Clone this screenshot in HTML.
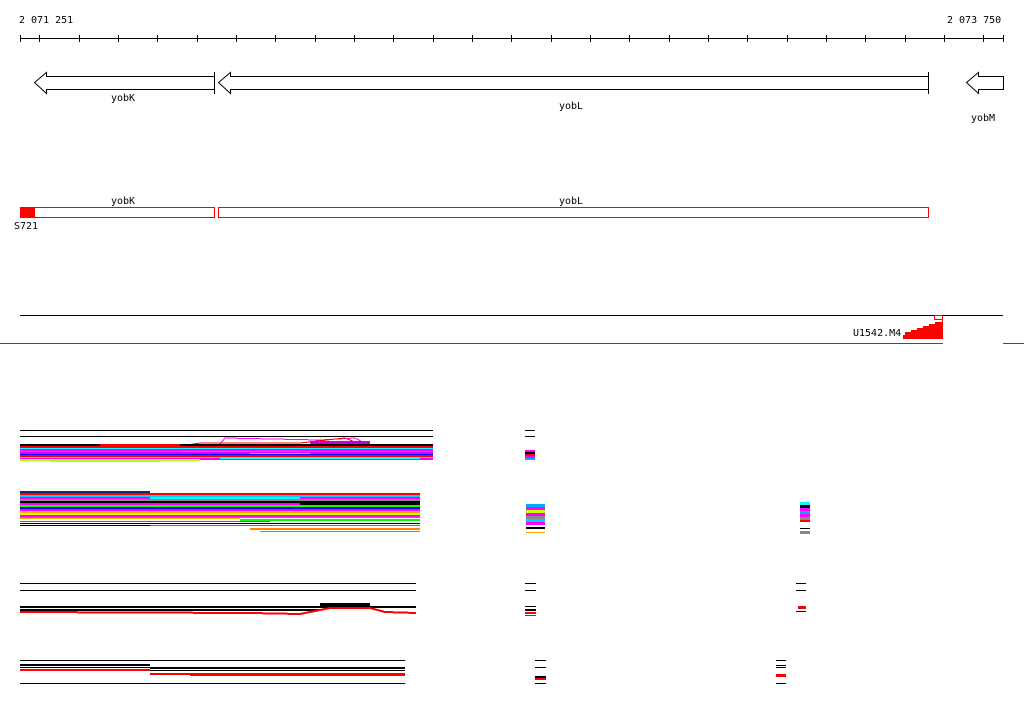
<!DOCTYPE html>
<html><head><meta charset="utf-8"><style>
html,body{margin:0;padding:0;background:#fff;width:1024px;height:714px;overflow:hidden}
svg{display:block}
text{font-family:"DejaVu Sans Mono","Liberation Mono",monospace;font-size:10px;fill:#000}
</style></head><body>
<svg width="1024" height="714" viewBox="0 0 1024 714" shape-rendering="crispEdges">
<text x="19" y="23">2 071 251</text>
<text x="947" y="23">2 073 750</text>
<line x1="20" y1="38.5" x2="1003" y2="38.5" stroke="#000"/>
<g stroke="#000">
<line x1="20.5" y1="35" x2="20.5" y2="42"/><line x1="1003.5" y1="35" x2="1003.5" y2="42"/>
<line x1="39.5" y1="35" x2="39.5" y2="42"/><line x1="79.5" y1="35" x2="79.5" y2="42"/><line x1="118.5" y1="35" x2="118.5" y2="42"/><line x1="157.5" y1="35" x2="157.5" y2="42"/><line x1="197.5" y1="35" x2="197.5" y2="42"/><line x1="236.5" y1="35" x2="236.5" y2="42"/><line x1="275.5" y1="35" x2="275.5" y2="42"/><line x1="315.5" y1="35" x2="315.5" y2="42"/><line x1="354.5" y1="35" x2="354.5" y2="42"/><line x1="393.5" y1="35" x2="393.5" y2="42"/><line x1="433.5" y1="35" x2="433.5" y2="42"/><line x1="472.5" y1="35" x2="472.5" y2="42"/><line x1="511.5" y1="35" x2="511.5" y2="42"/><line x1="551.5" y1="35" x2="551.5" y2="42"/><line x1="590.5" y1="35" x2="590.5" y2="42"/><line x1="629.5" y1="35" x2="629.5" y2="42"/><line x1="669.5" y1="35" x2="669.5" y2="42"/><line x1="708.5" y1="35" x2="708.5" y2="42"/><line x1="747.5" y1="35" x2="747.5" y2="42"/><line x1="787.5" y1="35" x2="787.5" y2="42"/><line x1="826.5" y1="35" x2="826.5" y2="42"/><line x1="865.5" y1="35" x2="865.5" y2="42"/><line x1="905.5" y1="35" x2="905.5" y2="42"/><line x1="944.5" y1="35" x2="944.5" y2="42"/><line x1="983.5" y1="35" x2="983.5" y2="42"/>
</g>
<g fill="#fff" stroke="#000" shape-rendering="auto">
<path d="M214.5 76.5 H46.5 V72.5 L34.5 82.5 L46.5 93.5 V89.5 H214.5"/>
<path d="M928.5 76.5 H230.5 V72.5 L218.5 82.5 L230.5 93.5 V89.5 H928.5"/>
<path d="M1003.5 76.5 H978.5 V72.5 L966.5 82.5 L978.5 93.5 V89.5 H1003.5 Z"/>
</g>
<line x1="214.5" y1="72" x2="214.5" y2="94" stroke="#000"/>
<line x1="928.5" y1="72" x2="928.5" y2="94" stroke="#000"/>
<text x="111" y="101">yobK</text><text x="559" y="109">yobL</text><text x="971" y="121">yobM</text>
<text x="111" y="204">yobK</text><text x="559" y="204">yobL</text>
<rect x="20.5" y="207.5" width="194" height="10" fill="#fff" stroke="#f00"/>
<rect x="218.5" y="207.5" width="710" height="10" fill="#fff" stroke="#f00"/>
<rect x="20" y="207" width="15" height="11" fill="#f00"/>
<text x="14" y="229">S721</text>
<line x1="20" y1="315.5" x2="1003" y2="315.5" stroke="#000"/>
<rect x="934.5" y="315.5" width="8" height="4" fill="#fff" stroke="#f00"/>
<line x1="942.5" y1="316" x2="942.5" y2="339" stroke="#f00"/>
<path d="M903 339 L942 339 L942 322 L935 322 L935 324 L929 324 L929 326 L923 326 L923 328 L917 328 L917 330 L911 330 L911 332 L905 332 L905 335 L903 335 Z" fill="#f00" shape-rendering="auto"/>
<text x="853" y="336">U1542.M4</text>
<line x1="0" y1="343.5" x2="943" y2="343.5" stroke="#f00"/>
<line x1="1003" y1="343.5" x2="1024" y2="343.5" stroke="#f00"/>

<!-- group 1 -->
<g fill="#000"><rect x="20" y="430" width="413" height="1"/><rect x="20" y="436" width="413" height="1"/></g>
<path d="M220 444 L225 438 L320 440 L355 438 L370 446" fill="none" stroke="#f0f"/>
<path d="M180 446 L200 443 L300 443 L345 438 L365 446" fill="none" stroke="#f00"/>
<g>
<rect x="20" y="444" width="413" height="2" fill="#000"/><rect x="20" y="446" width="413" height="2" fill="#f00"/>
<rect x="20" y="448" width="413" height="1" fill="#0ff"/><rect x="20" y="449" width="413" height="2" fill="#f0f"/>
<rect x="20" y="451" width="413" height="1" fill="#888"/><rect x="20" y="452" width="413" height="2" fill="#d0f"/>
<rect x="20" y="454" width="413" height="1" fill="#00f"/><rect x="20" y="455" width="413" height="2" fill="#f00"/>
<rect x="20" y="457" width="413" height="1" fill="#0ff"/><rect x="20" y="458" width="413" height="2" fill="#f0f"/>
<rect x="100" y="444" width="80" height="2" fill="#f00"/><rect x="310" y="441" width="60" height="3" fill="#c0c"/>
<rect x="180" y="451" width="120" height="1" fill="#0f0"/><rect x="250" y="453" width="60" height="1" fill="#fa0"/>
<rect x="20" y="459" width="180" height="2" fill="#af0"/><rect x="50" y="461" width="110" height="1" fill="#cf0"/>
<rect x="220" y="457" width="200" height="2" fill="#0ff"/><rect x="370" y="459" width="63" height="1" fill="#f0f"/>
</g>
<!-- group 2 -->
<g>
<rect x="20" y="491" width="130" height="2" fill="#036"/>
<rect x="20" y="493" width="400" height="2" fill="#f00"/><rect x="20" y="495" width="400" height="2" fill="#0cf"/>
<rect x="20" y="497" width="400" height="2" fill="#f0f"/><rect x="20" y="499" width="400" height="2" fill="#888"/>
<rect x="20" y="501" width="400" height="2" fill="#000"/><rect x="20" y="503" width="400" height="2" fill="#f0f"/>
<rect x="20" y="505" width="400" height="2" fill="#0f0"/><rect x="20" y="507" width="400" height="2" fill="#00f"/>
<rect x="20" y="509" width="400" height="2" fill="#f0f"/><rect x="20" y="511" width="400" height="2" fill="#fa0"/>
<rect x="20" y="513" width="400" height="2" fill="#cf0"/><rect x="20" y="515" width="400" height="2" fill="#f0f"/>
<rect x="20" y="517" width="400" height="1" fill="#888"/>
<rect x="20" y="518" width="220" height="1" fill="#fa0"/><rect x="240" y="519" width="180" height="2" fill="#0f0"/><rect x="20" y="521" width="250" height="1" fill="#f0f"/>
<rect x="20" y="523" width="400" height="1" fill="#000"/><rect x="150" y="525" width="270" height="1" fill="#f0f"/>
<rect x="250" y="528" width="170" height="2" fill="#f80"/><rect x="260" y="531" width="160" height="1" fill="#888"/>
<rect x="20" y="525" width="130" height="1" fill="#000"/>
<rect x="150" y="497" width="150" height="2" fill="#0ff"/><rect x="300" y="503" width="120" height="2" fill="#000"/>
<rect x="160" y="513" width="100" height="2" fill="#cf0"/>
</g>
<!-- group 3 -->
<g fill="#000"><rect x="20" y="583" width="396" height="1"/><rect x="20" y="590" width="396" height="1"/>
<rect x="20" y="606" width="396" height="2"/><rect x="20" y="609" width="300" height="2"/><rect x="320" y="603" width="50" height="3"/></g>
<path d="M20 612 L250 613 L300 614 L330 608 L370 608 L385 612 L416 613" fill="none" stroke="#f00" stroke-width="2"/>
<!-- group 4 -->
<g fill="#000"><rect x="20" y="660" width="385" height="1"/><rect x="20" y="683" width="385" height="1"/>
<rect x="20" y="664" width="130" height="2"/><rect x="20" y="667" width="130" height="1"/><rect x="150" y="667" width="255" height="2"/><rect x="150" y="670" width="255" height="1"/></g>
<rect x="20" y="669" width="130" height="2" fill="#f00"/><rect x="150" y="673" width="255" height="2" fill="#f00"/><rect x="190" y="675" width="215" height="1" fill="#f00"/>

<!-- stubs -->
<g fill="#000"><rect x="525" y="430" width="10" height="1"/><rect x="525" y="436" width="10" height="1"/>
<rect x="525" y="583" width="11" height="1"/><rect x="525" y="590" width="11" height="1"/>
<rect x="525" y="606" width="11" height="1"/><rect x="525" y="609" width="11" height="2"/>
<rect x="796" y="583" width="10" height="1"/><rect x="796" y="590" width="10" height="1"/><rect x="796" y="611" width="10" height="1"/>
<rect x="535" y="660" width="11" height="1"/><rect x="535" y="667" width="11" height="1"/><rect x="535" y="676" width="11" height="2"/><rect x="535" y="683" width="11" height="1"/>
<rect x="776" y="660" width="10" height="1"/><rect x="776" y="667" width="10" height="1"/><rect x="776" y="665" width="10" height="1"/><rect x="776" y="683" width="10" height="1"/></g>
<rect x="525" y="450" width="10" height="2" fill="#f0f"/><rect x="525" y="452" width="10" height="2" fill="#000"/><rect x="525" y="454" width="10" height="2" fill="#f00"/><rect x="525" y="456" width="10" height="2" fill="#f0f"/><rect x="525" y="458" width="10" height="2" fill="#0af"/>
<rect x="526" y="504" width="19" height="3" fill="#0af"/><rect x="526" y="507" width="19" height="3" fill="#f0f"/><rect x="526" y="510" width="19" height="3" fill="#cf0"/><rect x="526" y="513" width="19" height="3" fill="#f0f"/><rect x="526" y="516" width="19" height="3" fill="#888"/><rect x="526" y="519" width="19" height="3" fill="#0cf"/><rect x="526" y="522" width="19" height="3" fill="#f0f"/><rect x="526" y="527" width="19" height="2" fill="#000"/><rect x="526" y="532" width="19" height="1" fill="#fa0"/>
<rect x="800" y="502" width="10" height="3" fill="#0ff"/><rect x="800" y="505" width="10" height="3" fill="#000"/><rect x="800" y="508" width="10" height="3" fill="#f0f"/><rect x="800" y="511" width="10" height="3" fill="#0af"/><rect x="800" y="514" width="10" height="3" fill="#f0f"/><rect x="800" y="517" width="10" height="3" fill="#888"/><rect x="800" y="520" width="10" height="2" fill="#f00"/><rect x="800" y="528" width="10" height="1" fill="#000"/><rect x="800" y="531" width="10" height="3" fill="#888"/>
<rect x="525" y="612" width="11" height="2" fill="#f00"/><rect x="525" y="615" width="11" height="1" fill="#f00"/>
<rect x="798" y="606" width="8" height="3" fill="#f00"/>
<rect x="535" y="678" width="11" height="2" fill="#f00"/><rect x="776" y="674" width="10" height="3" fill="#f00"/>
</svg>
</body></html>
